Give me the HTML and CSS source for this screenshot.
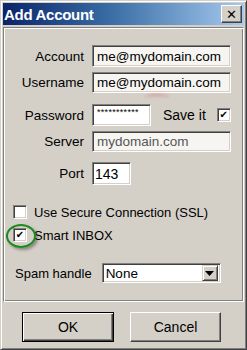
FILE: index.html
```html
<!DOCTYPE html>
<html lang="en">
<head>
    <meta charset="UTF-8">
    <title>Add Account</title>
    <link rel="stylesheet" href="styles.css">
</head>
<body>
    <div class="window">
        <div class="titlebar">
            <span class="title">Add Account</span>
            <span class="close-btn">&#x2715;</span>
        </div>

        <div class="panel">
            <div class="row row-account">
                <span class="label">Account</span>
                <div class="field field-soft field-wide">me@mydomain.com</div>
            </div>
            <div class="row row-username">
                <span class="label">Username</span>
                <div class="field field-soft field-wide">me@mydomain.com</div>
                <span class="smudge"></span>
            </div>
            <div class="row row-password">
                <span class="label">Password</span>
                <div class="field field-pass">***********</div>
                <span class="save-label">Save it</span>
                <span class="checkbox checked">&#x2714;</span>
            </div>
            <div class="row row-server">
                <span class="label">Server</span>
                <div class="field field-soft field-wide field-muted">mydomain.com</div>
            </div>
            <div class="row row-port">
                <span class="label">Port</span>
                <div class="field field-port">143</div>
            </div>

            <div class="check-row row-ssl">
                <span class="checkbox"></span>
                <span>Use Secure Connection (SSL)</span>
            </div>
            <div class="check-row row-smart">
                <span class="checkbox checked">&#x2714;</span>
                <span>Smart INBOX</span>
                <span class="mark-ring"></span>
            </div>

            <div class="spam-row">
                <span>Spam handle</span>
                <div class="select">
                    <span class="select-value">None</span>
                    <span class="select-arrow">
                        <svg width="9" height="5" viewBox="0 0 9 5"><path d="M0 0h9L4.5 5z" fill="#000"/></svg>
                    </span>
                </div>
            </div>
        </div>

        <div class="buttons">
            <button class="btn btn-default">OK</button>
            <button class="btn btn-cancel">Cancel</button>
        </div>
    </div>
</body>
</html>
```

FILE: styles.css
```css
* {
    margin: 0;
    padding: 0;
    box-sizing: border-box;
}

body {
    width: 247px;
    height: 350px;
    background: #d4d0c8;
    font-family: 'Liberation Sans', Arial, sans-serif;
    font-size: 13px;
    color: #000;
    overflow: hidden;
}

.window {
    width: 247px;
    height: 350px;
    padding: 2px;
    border-top: 1px solid #d4d0c8;
    border-left: 1px solid #d4d0c8;
    border-right: 1px solid #404040;
    border-bottom: 1px solid #404040;
    box-shadow: inset 1px 1px 0 #fff, inset -1px -1px 0 #808080;
    display: flex;
    flex-direction: column;
}

.titlebar {
    height: 22px;
    background: linear-gradient(90deg, #0a246a 0%, #3a6ea5 45%, #a6caf0 100%);
    display: flex;
    align-items: center;
    justify-content: space-between;
    padding: 0 2px 0 1px;
}

.title {
    color: #fff;
    font-weight: bold;
    font-size: 15px;
    letter-spacing: -0.3px;
}

.close-btn {
    width: 21px;
    height: 18px;
    background: #d4d0c8;
    border-top: 1px solid #fff;
    border-left: 1px solid #fff;
    border-right: 1px solid #404040;
    border-bottom: 1px solid #404040;
    box-shadow: inset -1px -1px 0 #808080;
    display: flex;
    align-items: center;
    justify-content: center;
    font-size: 13px;
    font-weight: bold;
    line-height: 1;
    font-family: 'DejaVu Sans', sans-serif;
}

.panel {
    position: relative;
    margin-top: 2px;
    height: 275px;
    border-top: 1px solid #808080;
    border-left: 1px solid #808080;
    border-right: 1px solid #fff;
    border-bottom: 1px solid #fff;
    box-shadow: inset 1px 1px 0 #fff, inset -1px -1px 0 #808080;
    padding: 17px 0 0 0;
}

.row {
    position: relative;
    display: flex;
    align-items: center;
    font-size: 13.5px;
}

.label {
    width: 80px;
    text-align: right;
    margin-right: 8px;
}

.row-account { height: 22px; }
.row-username { height: 21px; margin-top: 5px; }
.row-password { height: 22px; margin-top: 11px; }
.row-server { height: 21px; margin-top: 5px; }
.row-port { height: 23px; margin-top: 10px; }

.field {
    height: 100%;
    background: #fff;
    border-top: 1px solid #808080;
    border-left: 1px solid #808080;
    border-right: 1px solid #fff;
    border-bottom: 1px solid #fff;
    box-shadow: inset 1px 1px 0 #404040, inset -1px -1px 0 #d4d0c8;
    font-size: 13.5px;
    display: flex;
    align-items: center;
    padding-left: 4px;
    white-space: nowrap;
    overflow: hidden;
}

.field-soft {
    background: #f6f5f1;
}

.field-muted {
    color: #555;
}

.field-wide {
    width: 139px;
}

.field-pass {
    width: 59px;
    align-items: flex-start;
    font-size: 9px;
    letter-spacing: 0.3px;
    padding-top: 3px;
    padding-left: 4px;
    line-height: 1;
}

.field-port {
    width: 39px;
    padding-left: 2px;
    font-size: 14px;
}

.smudge {
    position: absolute;
    left: 140px;
    top: 22px;
    width: 26px;
    height: 8px;
    border-radius: 50%;
    border-top: 2px solid rgba(200, 90, 100, 0.45);
    filter: blur(1.5px);
}

.save-label {
    font-size: 14px;
    margin-left: 12px;
}

.checkbox {
    width: 14px;
    height: 14px;
    background: #fff;
    border-top: 1px solid #808080;
    border-left: 1px solid #808080;
    border-right: 1px solid #fff;
    border-bottom: 1px solid #fff;
    box-shadow: inset 1px 1px 0 #404040, inset -1px -1px 0 #d4d0c8;
    display: inline-flex;
    align-items: center;
    justify-content: center;
    font-size: 10px;
    line-height: 1;
    font-family: 'DejaVu Sans', sans-serif;
    flex-shrink: 0;
}

.row-password .checkbox {
    margin-left: 11px;
}

.check-row {
    position: relative;
    display: flex;
    align-items: center;
    gap: 7px;
    padding-left: 9px;
    height: 14px;
    font-size: 13px;
}

.row-ssl { margin-top: 20px; }
.row-smart { margin-top: 9px; }

.mark-ring {
    position: absolute;
    left: 2px;
    top: -4px;
    width: 30px;
    height: 24px;
    border: 2px solid #1f8a1f;
    border-radius: 50%;
    box-shadow: 2px 2px 3px rgba(0, 0, 0, 0.35);
}

.spam-row {
    display: flex;
    align-items: center;
    margin-top: 21px;
    padding-left: 11px;
    height: 20px;
    font-size: 13px;
}

.select {
    width: 119px;
    height: 20px;
    margin-left: 10px;
    background: #fff;
    border-top: 1px solid #808080;
    border-left: 1px solid #808080;
    border-right: 1px solid #fff;
    border-bottom: 1px solid #fff;
    box-shadow: inset 1px 1px 0 #404040, inset -1px -1px 0 #d4d0c8;
    display: flex;
    align-items: center;
    justify-content: space-between;
    padding: 1px 2px 1px 3px;
    font-size: 13.5px;
}

.select-arrow {
    width: 16px;
    height: 16px;
    background: #d4d0c8;
    border-top: 1px solid #d4d0c8;
    border-left: 1px solid #d4d0c8;
    border-right: 1px solid #404040;
    border-bottom: 1px solid #404040;
    box-shadow: inset 1px 1px 0 #fff, inset -1px -1px 0 #808080;
    display: flex;
    align-items: center;
    justify-content: center;
}

.buttons {
    display: flex;
    padding: 10px 0 0 19px;
    gap: 16px;
}

.btn {
    height: 30px;
    background: #d4d0c8;
    font-family: 'Liberation Sans', Arial, sans-serif;
    font-size: 14px;
    color: #000;
    border-top: 1px solid #fff;
    border-left: 1px solid #fff;
    border-right: 1px solid #404040;
    border-bottom: 1px solid #404040;
    box-shadow: inset -1px -1px 0 #808080;
}

.btn-default {
    width: 92px;
    border: 1px solid #000;
    box-shadow: inset 1px 1px 0 #fff, inset -1px -1px 0 #404040, inset -2px -2px 0 #808080;
}

.btn-cancel {
    width: 91px;
}
```
